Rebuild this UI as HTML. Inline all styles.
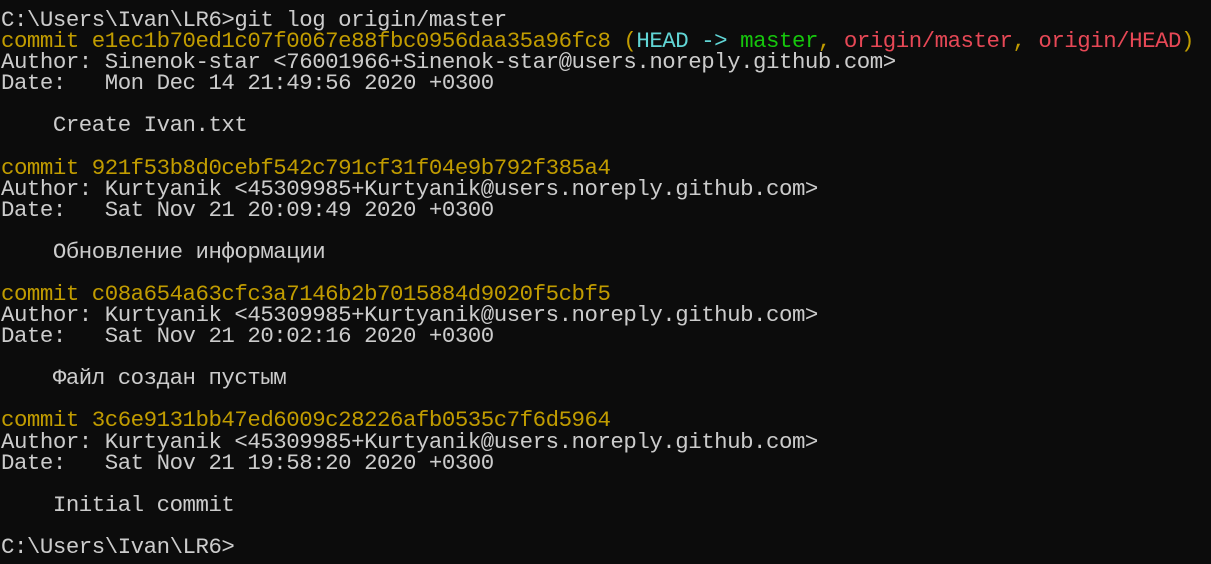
<!DOCTYPE html>
<html><head><meta charset="utf-8"><style>
html,body{margin:0;padding:0;background:#0c0c0c;width:1211px;height:564px;overflow:hidden}
pre{margin:0;padding:10px 0 0 1px;font-family:"Liberation Mono","DejaVu Sans Mono",monospace;font-size:22.4px;letter-spacing:-0.47px;line-height:21.08px;color:#cccccc}
.y{color:#c19c00}.c{color:#61d6d6}.g{color:#16c60c}.r{color:#e74856}
</style></head><body><pre>C:\Users\Ivan\LR6&gt;git log origin/master
<span class="y">commit e1ec1b70ed1c07f0067e88fbc0956daa35a96fc8 (</span><span class="c">HEAD -&gt; </span><span class="g">master</span><span class="y">, </span><span class="r">origin/master</span><span class="y">, </span><span class="r">origin/HEAD</span><span class="y">)</span>
Author: Sinenok-star &lt;76001966+Sinenok-star@users.noreply.github.com&gt;
Date:   Mon Dec 14 21:49:56 2020 +0300

    Create Ivan.txt

<span class="y">commit 921f53b8d0cebf542c791cf31f04e9b792f385a4</span>
Author: Kurtyanik &lt;45309985+Kurtyanik@users.noreply.github.com&gt;
Date:   Sat Nov 21 20:09:49 2020 +0300

    Обновление информации

<span class="y">commit c08a654a63cfc3a7146b2b7015884d9020f5cbf5</span>
Author: Kurtyanik &lt;45309985+Kurtyanik@users.noreply.github.com&gt;
Date:   Sat Nov 21 20:02:16 2020 +0300

    Файл создан пустым

<span class="y">commit 3c6e9131bb47ed6009c28226afb0535c7f6d5964</span>
Author: Kurtyanik &lt;45309985+Kurtyanik@users.noreply.github.com&gt;
Date:   Sat Nov 21 19:58:20 2020 +0300

    Initial commit

C:\Users\Ivan\LR6&gt;</pre></body></html>
